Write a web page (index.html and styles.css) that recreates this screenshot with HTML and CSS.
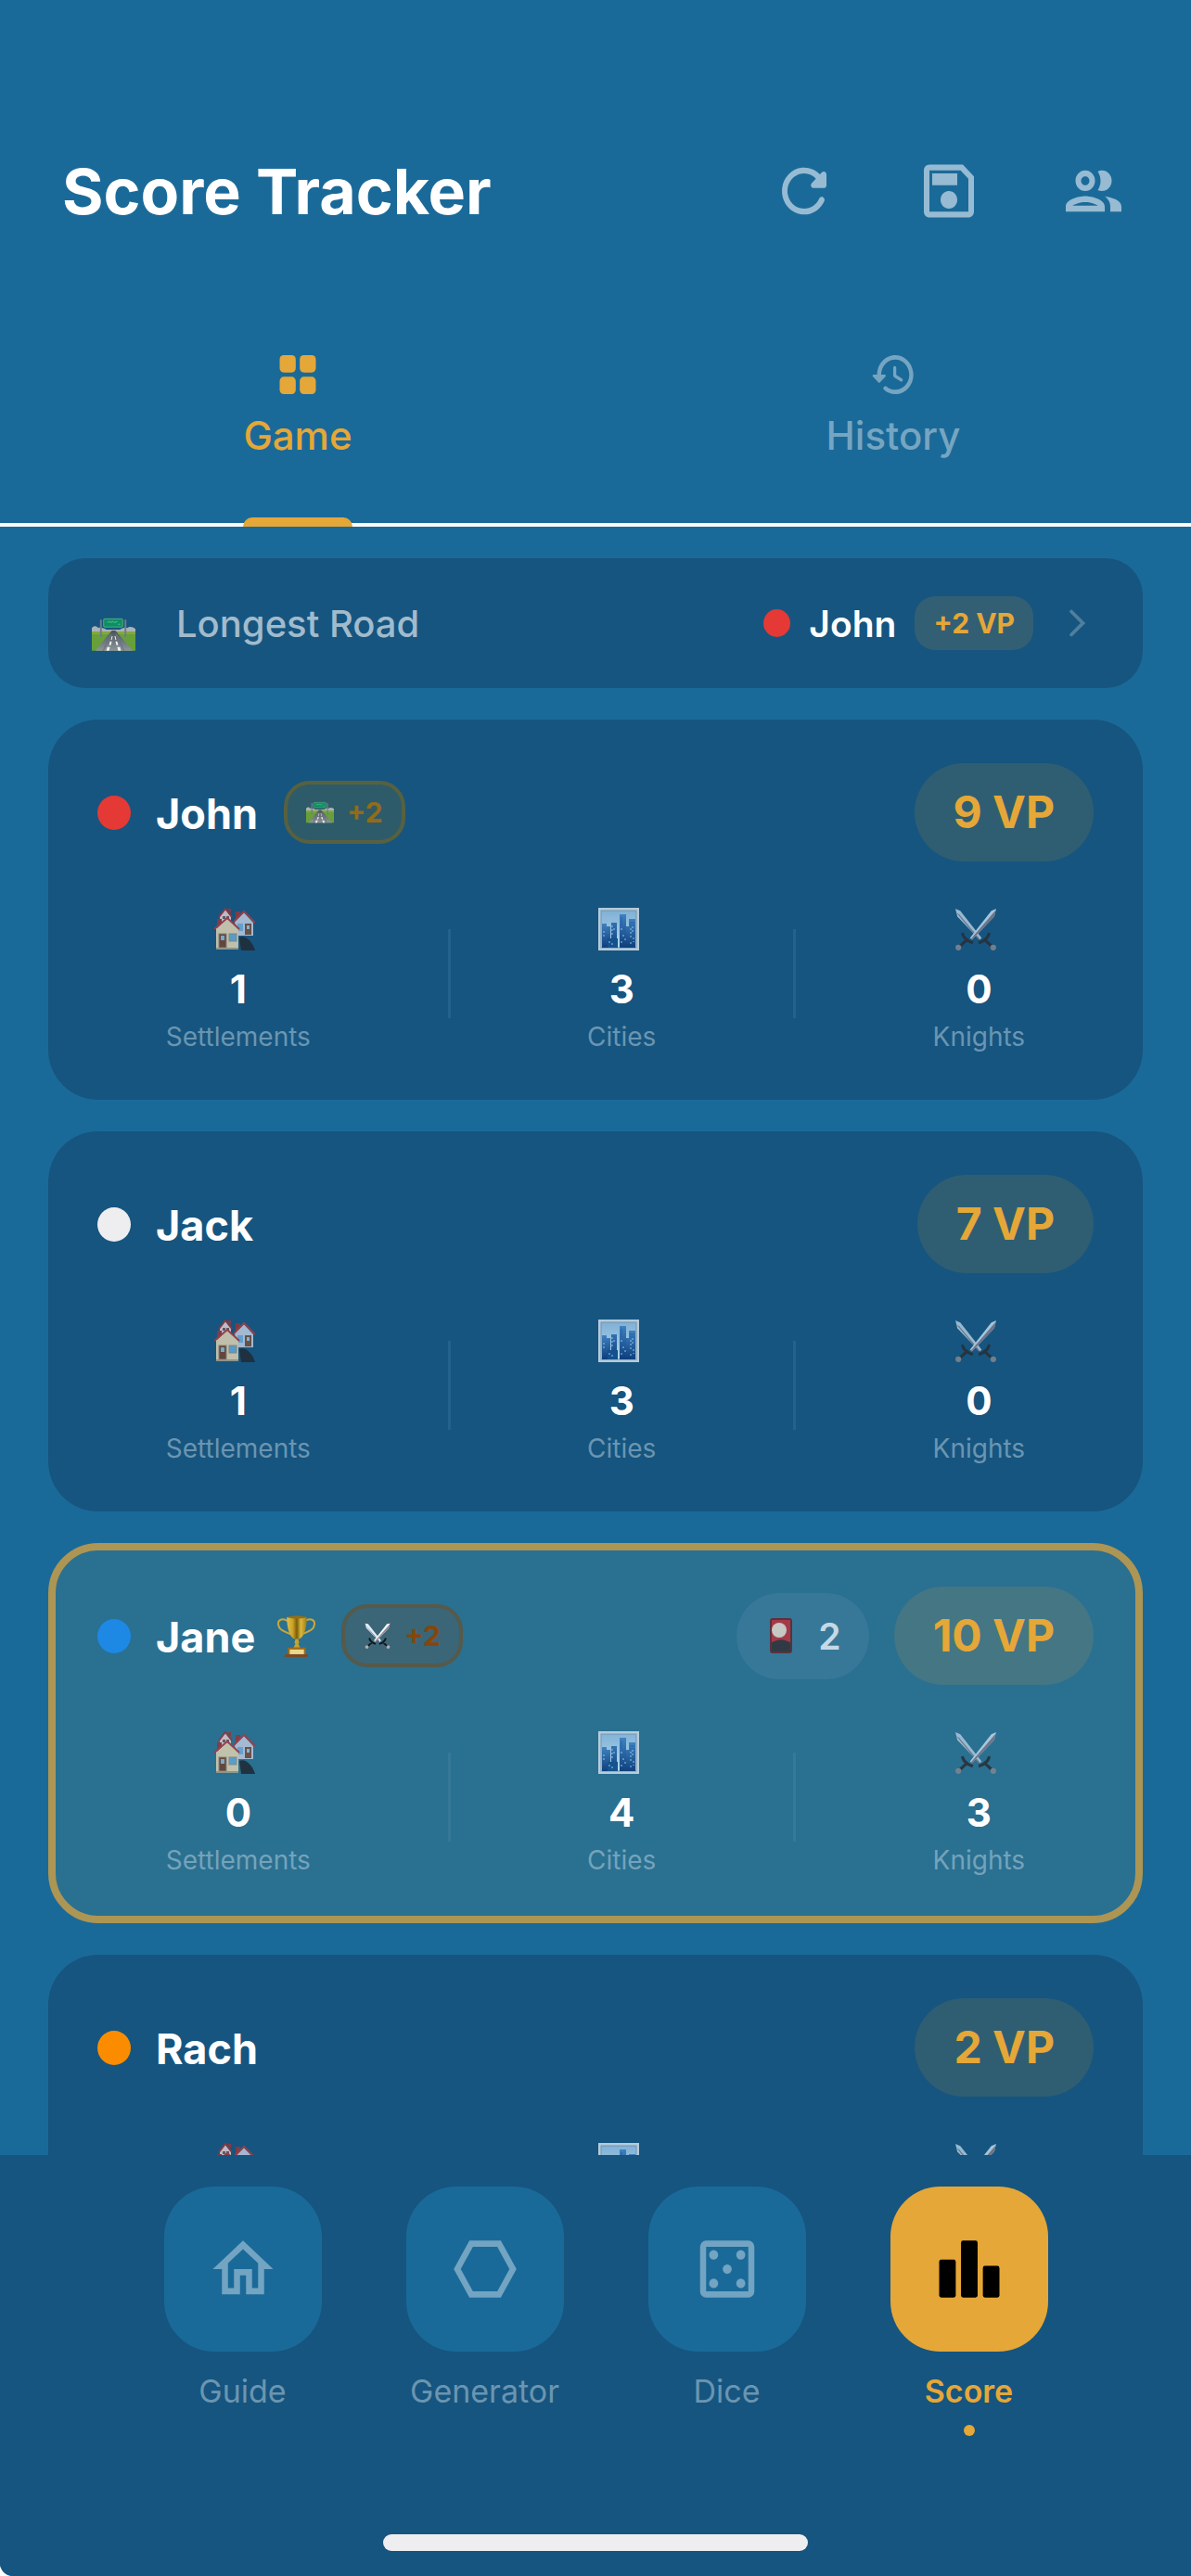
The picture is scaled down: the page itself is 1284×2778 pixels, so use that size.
FILE: index.html
```html
<!DOCTYPE html>
<html lang="en">
<head>
  <meta charset="UTF-8">
  <meta name="viewport" content="width=device-width, initial-scale=1">
  <title>Score Tracker</title>
  <link rel="stylesheet" href="styles.css">
</head>
<body>
  <!-- Shared pictures -->
  <svg class="defs" aria-hidden="true">
    <defs>
      <linearGradient id="asphalt" x1="0" y1="0" x2="0" y2="1">
        <stop offset="0" stop-color="#4a525a"/>
        <stop offset="1" stop-color="#8d959c"/>
      </linearGradient>
      <linearGradient id="sky" x1="0" y1="0" x2="0" y2="1">
        <stop offset="0" stop-color="#8dbbe0"/>
        <stop offset="1" stop-color="#bfe6f7"/>
      </linearGradient>
      <linearGradient id="tower" x1="0" y1="0" x2="0" y2="1">
        <stop offset="0" stop-color="#4486c8"/>
        <stop offset="1" stop-color="#0d3c7c"/>
      </linearGradient>
      <linearGradient id="gold" x1="0" y1="0" x2="1" y2="0">
        <stop offset="0" stop-color="#e0bf4a"/>
        <stop offset="0.3" stop-color="#c9a227"/>
        <stop offset="0.5" stop-color="#7a5c08"/>
        <stop offset="0.7" stop-color="#d9b83c"/>
        <stop offset="1" stop-color="#a07c14"/>
      </linearGradient>
    </defs>

    <symbol id="road" viewBox="0 0 48 36">
      <path d="M0 15V11c3-3 5-2 7 0 3-1 6 0 9 2h15c3-2 5-3 8-2 3-2 6-1 9 1v3z" fill="#aab4b8"/>
      <path d="M0 15h48v21H0z" fill="#67a03a"/>
      <path d="M0 15h48v3H0z" fill="#83a83e"/>
      <path d="M22 14h4l19 22H4z" fill="url(#asphalt)"/>
      <path d="M22 18l-9 18h-1l8-18zM26 18l9 18h1l-8-18z" fill="#6b747b"/>
      <path d="M22 20h1l-1 4h-1zM20 26h2l-1 4h-2zM17 32h3l-1 4h-3zM25 20h1l1 4h-1zM26 26h2l1 4h-2zM28 32h3l1 4h-3z" fill="#eef2f4"/>
      <path d="M9 2h2v19H9zM36 2h2v19h-2z" fill="#6e7c86"/>
      <rect x="13" y="1" width="21" height="9" rx="1" fill="#0d8f61" stroke="#4fae88"/>
      <path d="M17 5l2-1 2 1 2-1 2 1 3-1M29 7h2" stroke="#5cc39b" fill="none"/>
    </symbol>

    <symbol id="houses" viewBox="0 0 44 46">
      <path d="M27 32c6-3 14 4 17 14H29z" fill="#202c38"/>
      <path d="M6 9l6-8 6 8v6H6z" fill="#d3c6ce"/>
      <path d="M5 10l7-9 7 9" fill="none" stroke="#8c3940" stroke-width="2"/>
      <path d="M15 1h3v5l-3-3z" fill="#8c3940"/>
      <rect x="9" y="9" width="3" height="3" fill="#665a64"/>
      <rect x="13" y="9" width="3" height="3" fill="#665a64"/>
      <path d="M22 15L32 5l10 11v14H24z" fill="#b3c3da"/>
      <path d="M23 4h5v5l-5 4z" fill="#8c3940"/>
      <path d="M21 15L32 4l12 12" fill="none" stroke="#9c3f48" stroke-width="2"/>
      <rect x="33" y="17" width="7" height="12" fill="#70503f"/>
      <rect x="35" y="19" width="3" height="4" fill="#8cbbe0"/>
      <rect x="25" y="17" width="6" height="8" fill="#6ea8d4"/>
      <path d="M2 22L14 11l12 11v22H2z" fill="#d2cbb0"/>
      <path d="M3 12h5v5l-5 5z" fill="#8c3940"/>
      <path d="M0 23l14-12 13 12" fill="none" stroke="#a03c45" stroke-width="2"/>
      <rect x="5" y="28" width="8" height="15" fill="#6b4434" stroke="#8d8377"/>
      <rect x="7" y="30" width="4" height="5" fill="#7fb2d8"/>
      <rect x="16" y="28" width="8" height="8" fill="#5fa3d2" stroke="#938b80"/>
      <path d="M2 43h24v2H2z" fill="#9d9b8b"/>
    </symbol>

    <symbol id="city" viewBox="0 0 44 46">
      <rect width="44" height="46" fill="#c4d8e6"/>
      <rect x="3" y="3" width="38" height="40" fill="url(#sky)" stroke="#7c9cb6"/>
      <path d="M4 17h5v26H4zM9 20h4v23H9z" fill="url(#tower)"/>
      <path d="M14 16h6v27h-6zM23 7h7v36h-7z" fill="url(#tower)"/>
      <path d="M33 12h7v31h-7zM30 20h3v23h-3z" fill="url(#tower)"/>
      <path d="M10 33h11v10H10z" fill="#14508f"/>
      <path d="M15 19v10M17 22v4M25 22v4M27 29v3M35 22v10M37 20v6M38 32v5M6 25v6M12 36v3M15 38v3M25 36v3M29 33v4M35 37v3" stroke="#9fd0f0" stroke-dasharray="2 2" fill="none"/>
      <path d="M25 10v9M34 16h5M34 19h5" stroke="#2467ae" fill="none"/>
    </symbol>

    <symbol id="swords" viewBox="0 0 42 44">
      <path d="M0 1l5 2 22 28-2 2L2 9z" fill="#a5c4dc"/>
      <path d="M1 5l23 28 1-1L4 7z" fill="#727c89"/>
      <path d="M42 1l-5 2-22 28 2 2L40 9z" fill="#b1d3ea"/>
      <path d="M42 2l-2 7-23 24-1-1z" fill="#7b7685"/>
      <path d="M7 26c1 4 3 8 11 10M13 32L3 41M35 26c-1 4-3 8-11 10M29 32l10 9" fill="none" stroke="#28313a" stroke-width="3"/>
      <circle cx="3" cy="41" r="3" fill="#7d848f"/>
      <circle cx="39" cy="41" r="3" fill="#7d848f"/>
    </symbol>

    <symbol id="swords-bright" viewBox="0 0 42 44">
      <path d="M0 1l5 1 22 28-2 3L2 9z" fill="#e2edf6"/>
      <path d="M1 5l23 28 1-1L4 8z" fill="#74808d"/>
      <path d="M42 1l-5 1-22 28 2 3L40 9z" fill="#f3f9fd"/>
      <path d="M42 2l-2 7-23 24-1-1z" fill="#8d8591"/>
      <path d="M7 26c1 4 3 8 11 10M13 32L3 41M35 26c-1 4-3 8-11 10M29 32l10 9" fill="none" stroke="#10161c" stroke-width="3"/>
      <circle cx="3" cy="41" r="3" fill="#b5aab2"/>
      <circle cx="39" cy="41" r="3" fill="#b5aab2"/>
    </symbol>

    <symbol id="trophy" viewBox="0 0 40 44">
      <path d="M11 6C5 2 0 5 1 10c1 6 7 7 13 10M29 6c6-4 11-1 10 4-1 6-7 7-13 10" fill="none" stroke="#c9a63a" stroke-width="2"/>
      <path d="M10 2h21c0 12-3 21-8 23h-5c-5-2-8-11-8-23z" fill="url(#gold)"/>
      <path d="M10 2c6-2 15-2 21 0-6 2-15 2-21 0z" fill="#927016"/>
      <path d="M19 25h3l1 4-1 1 2 4h-7l2-4-1-1z" fill="#c7a232"/>
      <path d="M11 34h19v8H11z" fill="#9a6a1c"/>
      <path d="M13 36h15v5H13z" fill="#ecd98c"/>
      <path d="M9 41h23v3H7z" fill="#7a4a28"/>
    </symbol>

    <symbol id="card" viewBox="0 0 24 38">
      <rect width="24" height="38" rx="3" fill="#59323f"/>
      <path d="M2 2h20v24H2z" fill="#a33a48"/>
      <path d="M2 27c6-5 14-5 20 0v9H2z" fill="#303a45"/>
      <circle cx="10" cy="13" r="8" fill="#c6c8c4"/>
    </symbol>
  </svg>

  <header class="header">
    <h1>Score Tracker</h1>
    <div class="actions">
      <button class="icon-button" aria-label="Reset game">
        <svg viewBox="0 0 24 24" preserveAspectRatio="none"><path d="M17.65 6.35c-1.63-1.63-3.94-2.57-6.48-2.31-3.67.37-6.69 3.35-7.1 7.02C3.52 15.91 7.27 20 12 20c3.19 0 5.93-1.87 7.21-4.56.32-.67-.16-1.44-.9-1.44-.37 0-.72.2-.88.53-1.13 2.43-3.84 3.97-6.8 3.31-2.22-.49-4.01-2.3-4.48-4.52C5.31 9.44 8.26 6 12 6c1.66 0 3.14.69 4.22 1.78l-1.51 1.51c-.63.63-.19 1.71.7 1.71H19c.55 0 1-.45 1-1V6.41c0-.89-1.08-1.34-1.71-.71l-.64.65z"/></svg>
      </button>
      <button class="icon-button" aria-label="Save game">
        <svg viewBox="0 0 24 24" preserveAspectRatio="none"><path d="M17 3H5c-1.110 0-2 .9-2 2v14c0 1.100.890 2 2 2h14c1.100 0 2-.9 2-2V7l-4-4zm2 16H5V5h11.170L19 7.830V19zm-7-7c-1.660 0-3 1.340-3 3s1.340 3 3 3 3-1.340 3-3-1.340-3-3-3zM6 6h9v4H6z"/></svg>
      </button>
      <button class="icon-button" aria-label="Players">
        <svg viewBox="0 0 24 24" preserveAspectRatio="none"><path d="M9 13.75c-2.34 0-7 1.17-7 3.5V19h14v-1.75c0-2.33-4.66-3.5-7-3.5zM4.34 17c.84-.58 2.87-1.25 4.66-1.25s3.82.67 4.66 1.25H4.34zM9 12c1.93 0 3.500-1.57 3.500-3.500S10.930 5 9 5 5.500 6.570 5.500 8.500 7.070 12 9 12zm0-5c.83 0 1.500.67 1.500 1.500S9.830 10 9 10s-1.500-.67-1.500-1.500S8.170 7 9 7zm7.040 6.810c1.160.84 1.960 1.960 1.960 3.440V19h4v-1.750c0-2.020-3.500-3.170-5.960-3.440zM15 12c1.930 0 3.500-1.570 3.500-3.500S16.930 5 15 5c-.54 0-1.040.13-1.500.35.63.89 1 1.980 1 3.150s-.37 2.260-1 3.150c.46.22.96.35 1.500.35z"/></svg>
      </button>
    </div>
  </header>

  <div class="tabs" role="tablist">
    <button class="tab active" role="tab" aria-selected="true">
      <span class="tab-content">
        <svg viewBox="0 0 24 24" preserveAspectRatio="none"><rect x="3" y="3" width="8" height="8" rx="2"/><rect x="13" y="3" width="8" height="8" rx="2"/><rect x="3" y="13" width="8" height="8" rx="2"/><rect x="13" y="13" width="8" height="8" rx="2"/></svg>
        Game
      </span>
    </button>
    <button class="tab" role="tab" aria-selected="false">
      <span class="tab-content">
        <svg viewBox="0 0 24 24" preserveAspectRatio="none"><path d="M13.260 3C8.170 2.860 4 6.950 4 12H2.210c-.450 0-.670.540-.350.850l2.790 2.800c.2.200.510.200.710 0l2.790-2.800c.310-.310.090-.850-.360-.850H6c0-3.900 3.180-7.050 7.100-7 3.720.050 6.850 3.180 6.900 6.900.050 3.910-3.100 7.100-7 7.100-1.610 0-3.100-.550-4.280-1.480-.4-.310-.960-.280-1.320.080-.420.420-.390 1.130.080 1.490C9 20.290 10.910 21 13 21c5.050 0 9.140-4.170 9-9.260-.130-4.690-4.050-8.610-8.740-8.740zm-.510 5c-.410 0-.750.340-.750.750v3.680c0 .350.190.680.490.860l3.120 1.850c.360.210.820.090 1.030-.260.210-.360.090-.820-.260-1.030l-2.880-1.710v-3.400c0-.4-.340-.740-.750-.740z"/></svg>
        History
      </span>
    </button>
  </div>

  <main class="list">
    <button class="award">
      <svg class="award-icon"><use href="#road"/></svg>
      <span class="award-title">Longest Road</span>
      <span class="dot small red"></span>
      <span class="award-holder">John</span>
      <span class="award-points">+2 VP</span>
      <svg class="chevron" viewBox="0 0 24 24"><path d="M10 7l5 5-5 5" fill="none" stroke="currentColor" stroke-width="1.500" stroke-linecap="round"/></svg>
    </button>

    <article class="player">
      <div class="player-head">
        <span class="dot red"></span>
        <h2>John</h2>
        <span class="bonus road-bonus"><svg><use href="#road"/></svg>+2</span>
        <span class="points">9 VP</span>
      </div>
      <div class="stats">
        <div class="stat"><svg><use href="#houses"/></svg><strong>1</strong><span>Settlements</span></div>
        <div class="divider"></div>
        <div class="stat"><svg><use href="#city"/></svg><strong>3</strong><span>Cities</span></div>
        <div class="divider"></div>
        <div class="stat"><svg><use href="#swords"/></svg><strong>0</strong><span>Knights</span></div>
      </div>
    </article>

    <article class="player">
      <div class="player-head">
        <span class="dot white"></span>
        <h2>Jack</h2>
        <span class="points">7 VP</span>
      </div>
      <div class="stats">
        <div class="stat"><svg><use href="#houses"/></svg><strong>1</strong><span>Settlements</span></div>
        <div class="divider"></div>
        <div class="stat"><svg><use href="#city"/></svg><strong>3</strong><span>Cities</span></div>
        <div class="divider"></div>
        <div class="stat"><svg><use href="#swords"/></svg><strong>0</strong><span>Knights</span></div>
      </div>
    </article>

    <article class="player winner">
      <div class="player-head">
        <span class="dot blue"></span>
        <h2>Jane</h2>
        <svg class="trophy"><use href="#trophy"/></svg>
        <span class="bonus knight-bonus"><svg><use href="#swords-bright"/></svg>+2</span>
        <span class="cards"><svg><use href="#card"/></svg>2</span>
        <span class="points">10 VP</span>
      </div>
      <div class="stats">
        <div class="stat"><svg><use href="#houses"/></svg><strong>0</strong><span>Settlements</span></div>
        <div class="divider"></div>
        <div class="stat"><svg><use href="#city"/></svg><strong>4</strong><span>Cities</span></div>
        <div class="divider"></div>
        <div class="stat"><svg><use href="#swords"/></svg><strong>3</strong><span>Knights</span></div>
      </div>
    </article>

    <article class="player">
      <div class="player-head">
        <span class="dot orange"></span>
        <h2>Rach</h2>
        <span class="points">2 VP</span>
      </div>
      <div class="stats">
        <div class="stat"><svg><use href="#houses"/></svg><strong>0</strong><span>Settlements</span></div>
        <div class="divider"></div>
        <div class="stat"><svg><use href="#city"/></svg><strong>1</strong><span>Cities</span></div>
        <div class="divider"></div>
        <div class="stat"><svg><use href="#swords"/></svg><strong>0</strong><span>Knights</span></div>
      </div>
    </article>
  </main>

  <footer class="bottom">
    <nav class="nav">
      <a class="nav-item" href="#guide">
        <span class="nav-icon"><svg viewBox="0 0 24 24" preserveAspectRatio="none"><path d="M12 5.690l5 4.500V18h-2v-6H9v6H7v-7.810l5-4.500M12 3L2 12h3v8h6v-6h2v6h6v-8h3L12 3z"/></svg></span>
        Guide
      </a>
      <a class="nav-item" href="#generator">
        <span class="nav-icon"><svg viewBox="0 0 24 24" preserveAspectRatio="none"><path d="M17.200 3H6.800l-5.200 9 5.200 9h10.400l5.200-9-5.200-9zm-1.150 16h-8.100l-4.040-7 4.040-7h8.090l4.040 7-4.030 7z"/></svg></span>
        Generator
      </a>
      <a class="nav-item" href="#dice">
        <span class="nav-icon"><svg viewBox="0 0 24 24" preserveAspectRatio="none"><rect x="4" y="4" width="16" height="16" rx="1" fill="none" stroke="currentColor" stroke-width="2"/><circle cx="7.500" cy="7.500" r="1.500"/><circle cx="16.500" cy="7.500" r="1.500"/><circle cx="12" cy="12" r="1.500"/><circle cx="7.500" cy="16.500" r="1.500"/><circle cx="16.500" cy="16.500" r="1.500"/></svg></span>
        Dice
      </a>
      <a class="nav-item active" href="#score" aria-current="page">
        <span class="nav-icon"><svg viewBox="0 0 24 24" preserveAspectRatio="none"><rect x="2" y="9" width="5.500" height="12" rx=".7"/><rect x="9.250" y="3" width="5.500" height="18" rx=".7"/><rect x="16.500" y="11" width="5.500" height="10" rx=".7"/></svg></span>
        Score
      </a>
    </nav>
    <div class="home-bar"></div>
  </footer>
</body>
</html>
```
FILE: styles.css
```css
* {
  box-sizing: border-box;
}
html {
  background-color: white;
}
body {
  display: flex;
  flex-direction: column;
  height: 100vh;
  margin: 0;
  overflow: hidden;
  border-bottom-left-radius: 14px;
  background-color: #1a6a99;
  color: white;
  font-family: Inter, "Liberation Sans", sans-serif;
}
h1, h2 {
  margin: 0;
  font-weight: bold;
}
button {
  border: none;
  padding: 0;
  background: none;
  color: inherit;
  font: inherit;
  cursor: pointer;
}
svg {
  display: block;
  flex: none;
  fill: currentColor;
}
.defs {
  position: absolute;
  width: 0;
  height: 0;
}

/* Header */
.header {
  display: flex;
  align-items: center;
  justify-content: space-between;
  padding: 128px 27px 49px 67px;
}
h1 {
  font-size: 68px;
  line-height: 80px;
}
.actions {
  display: flex;
  color: #97bbd2;
}
.icon-button {
  display: flex;
  align-items: center;
  justify-content: center;
  width: 156px;
  height: 156px;
}
.icon-button svg {
  width: 72px;
  height: 76px;
}

/* Tabs */
.tabs {
  display: flex;
  border-bottom: 4px solid white;
}
.tab {
  flex: 1;
  display: flex;
  justify-content: center;
  color: #76a5c2;
  font-size: 42px;
  font-weight: 500;
  line-height: 52px;
}
.tab-content {
  position: relative;
  display: flex;
  flex-direction: column;
  align-items: center;
  gap: 12px;
  padding: 43px 0 68px;
}
.tab svg {
  width: 52px;
  height: 56px;
}
.tab.active {
  color: #e5a737;
}
.tab.active .tab-content::after {
  content: "";
  position: absolute;
  right: 0;
  bottom: -4px;
  left: 0;
  height: 10px;
  border-radius: 10px 10px 0 0;
  background-color: #e5a737;
}

/* Score list */
.list {
  flex: 1;
  display: flex;
  flex-direction: column;
  gap: 34px;
  min-height: 0;
  padding: 34px 52px 0;
  overflow: hidden;
}
.award {
  display: flex;
  flex: none;
  align-items: center;
  min-height: 140px;
  padding: 40px 42px 40px 47px;
  border-radius: 40px;
  background-color: #16557f;
  font-size: 39px;
  text-align: left;
}
.award-icon {
  align-self: flex-end;
  width: 47px;
  height: 36px;
}
.award-title {
  flex: 1;
  margin-left: 44px;
  color: #a2bbcc;
  font-size: 40px;
  font-weight: 500;
}
.award-holder {
  margin: 0 20px;
  font-weight: 600;
}
.award-points {
  padding: 11px 20px;
  border-radius: 22px;
  background-color: #335f75;
  color: #e5a737;
  font-size: 30px;
  font-weight: bold;
  line-height: 36px;
}
.chevron {
  width: 60px;
  height: 60px;
  margin-left: 16px;
  color: #4f7f9f;
}
.dot {
  flex: none;
  width: 36px;
  height: 37px;
  border-radius: 50%;
}
.dot.small {
  width: 29px;
  height: 30px;
}
.red {
  background-color: #e53935;
}
.white {
  background-color: #eeeef0;
}
.blue {
  background-color: #1e88e5;
}
.orange {
  background-color: #fb8c00;
}

/* Player cards */
.player {
  flex: none;
  padding: 47px 53px 51px;
  border-radius: 54px;
  background-color: #16557f;
}
.player.winner {
  padding: 39px 45px 43px;
  border: 8px solid #ad9554;
  background-color: #2a7091;
}
.player-head {
  display: flex;
  align-items: center;
}
h2 {
  margin-left: 27px;
  padding-top: 4px;
  font-size: 45px;
  line-height: 54px;
}
.trophy {
  width: 41px;
  height: 45px;
  margin-left: 24px;
}
.bonus {
  display: flex;
  align-items: center;
  gap: 14px;
  height: 68px;
  margin-left: 28px;
  padding: 0 20px;
  border: 4px solid;
  border-radius: 28px;
  font-size: 30px;
  font-weight: bold;
}
.bonus svg {
  width: 30px;
  height: 28px;
}
.road-bonus {
  border-color: #576140;
  background-color: #2e5b69;
  color: #936b19;
}
.knight-bonus {
  border-color: #555a4b;
  background-color: #3b6677;
  color: #87450a;
}
.points {
  margin-left: auto;
  padding: 24px 42px;
  border-radius: 53px;
  background-color: #2f5e73;
  color: #e5a737;
  font-size: 48px;
  font-weight: bold;
  line-height: 58px;
}
.winner .points {
  background-color: #447684;
}
.cards {
  display: flex;
  align-items: center;
  gap: 28px;
  height: 93px;
  margin-left: auto;
  padding: 0 30px 0 36px;
  border-radius: 47px;
  background-color: #377899;
  color: #c5d9e5;
  font-size: 39px;
  font-weight: 600;
}
.cards svg {
  width: 24px;
  height: 38px;
}
.cards + .points {
  margin-left: 27px;
}
.stats {
  display: flex;
  align-items: center;
  justify-content: space-around;
  min-height: 156px;
  margin-top: 50px;
}
.stat {
  display: flex;
  flex-direction: column;
  align-items: center;
  align-self: flex-start;
}
.stat svg {
  width: 44px;
  height: 46px;
  margin-right: 7px;
  opacity: 0.9;
}
.stat strong {
  margin: 16px 0 8px;
  font-size: 42px;
  line-height: 52px;
}
.stat span {
  color: #6b95b1;
  font-size: 28px;
  line-height: 34px;
}
.winner .stat span {
  color: #74a3ba;
}
.divider {
  width: 3px;
  height: 96px;
  margin-bottom: 14px;
  background-color: #22628c;
}
.winner .divider {
  background-color: #367898;
}

/* Bottom navigation */
.bottom {
  padding-bottom: 27px;
  background-color: #16557f;
}
.nav {
  display: flex;
  padding: 34px 109px 0 131px;
}
.nav-item {
  flex: 1;
  display: flex;
  flex-direction: column;
  align-items: center;
  min-height: 375px;
  color: #6b95b1;
  font-size: 34px;
  line-height: 42px;
  text-decoration: none;
}
.nav-icon {
  display: flex;
  align-items: center;
  justify-content: center;
  width: 170px;
  height: 178px;
  margin-bottom: 22px;
  border-radius: 54px;
  background-color: #1a6a99;
  color: #73a4c2;
}
.nav-icon svg {
  width: 78px;
  height: 82px;
}
.nav-item.active {
  color: #e5a737;
  font-weight: 600;
}
.nav-item.active .nav-icon {
  background-color: #e5a737;
  color: black;
}
.nav-item.active::after {
  content: "";
  width: 12px;
  height: 12px;
  margin-top: 15px;
  border-radius: 50%;
  background-color: currentColor;
}
.home-bar {
  width: 458px;
  max-width: 100%;
  height: 18px;
  margin: 0 auto;
  border-radius: 9px;
  background-color: #eeeef0;
}
```
